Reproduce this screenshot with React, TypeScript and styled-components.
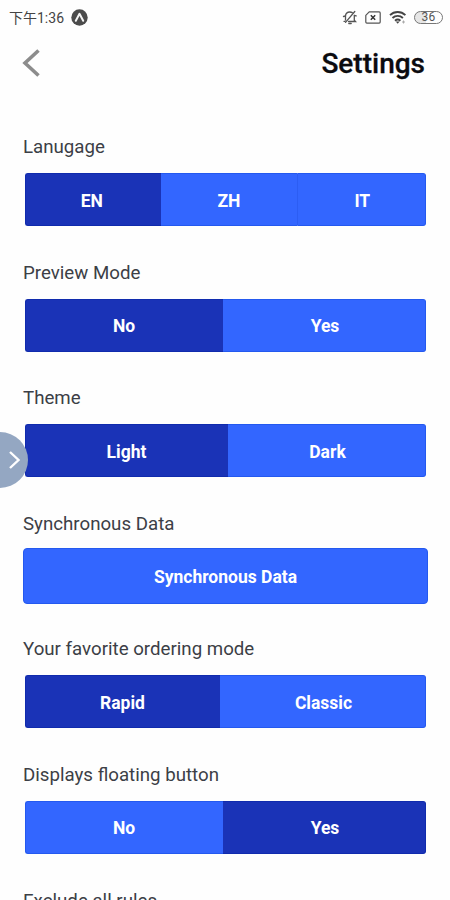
import React, { useState } from "react";
import styled, { createGlobalStyle } from "styled-components";

const GlobalStyle = createGlobalStyle`
  * { box-sizing: border-box; }
  html, body { margin: 0; background: #fefefe; }
  body { font-family: Roboto, "Noto Sans CJK SC", sans-serif; overflow: hidden; }
`;

const Screen = styled.main`
  position: relative;
  width: 450px;
  height: 900px;
  overflow: hidden;
  background: #fefefe;
`;

const StatusBar = styled.div`
  display: flex;
  align-items: center;
  justify-content: space-between;
  height: 35px;
  padding: 0 7px 0 9px;
  color: #444;
`;

const StatusGroup = styled.div<{ $gap: number }>`
  display: flex;
  align-items: center;
  gap: ${(p) => p.$gap}px;
`;

const Clock = styled.span`
  padding-top: 1px;
  font-size: 14px;
  line-height: 20px;
`;

const Battery = styled.span`
  width: 29px;
  height: 13px;
  border: 1.3px solid #777;
  border-radius: 7px;
  background: linear-gradient(90deg, #e6e6e6 40%, #fefefe 40%);
  color: #555;
  font-size: 12px;
  line-height: 11px;
  letter-spacing: 0.3px;
  text-align: center;
`;

const Header = styled.header`
  display: flex;
  align-items: center;
  justify-content: space-between;
  height: 58px;
  padding: 0 25px 0 22px;
`;

const BackButton = styled.button`
  display: flex;
  margin-top: -2px;
  padding: 0;
  border: 0;
  background: none;
`;

const Title = styled.h1`
  margin: 0;
  color: #0b0b0f;
  font-size: 28px;
  font-weight: 500;
  line-height: 34px;
  -webkit-text-stroke: 0.3px #0b0b0f;
`;

const Sections = styled.div`
  padding: 41px 22px 0 23px;
`;

const Section = styled.section`
  height: 125.6px;
`;

const Label = styled.h2`
  margin: 0 0 11.5px;
  padding-top: 1px;
  color: #3c3f46;
  font-size: 18.7px;
  font-weight: 400;
  line-height: 25px;
  white-space: nowrap;
`;

const Segments = styled.div<{ $columns: string }>`
  display: grid;
  grid-template-columns: ${(p) => p.$columns};
  height: 56px;
  padding: 1.5px 2px;
`;

const Segment = styled.button<{ $active: boolean }>`
  padding: 2px 0 0 1px;
  border: 1px solid ${(p) => (p.$active ? "#102bad" : "#2459ef")};
  border-width: 1px 0;
  background: ${(p) => (p.$active ? "#1a33b7" : "#3366ff")};
  color: #fff;
  font: 700 17.5px/24px Roboto, sans-serif;

  &:first-child { border-left-width: 1px; border-radius: 3px 0 0 3px; padding: 2px 3px 0 0; }
  &:first-child:nth-last-child(2) { padding-right: 1px; }
  &:last-child { border-right-width: 1px; border-radius: 0 3px 3px 0; padding-left: 2px; }
  &:nth-child(3) { border-left: 1px solid #2c5df3; }
`;

const ActionButton = styled.button`
  display: block;
  width: 100%;
  height: 56px;
  padding: 2px 0 0;
  border: 1px solid #2459ef;
  border-radius: 4px;
  background: #3366ff;
  color: #fff;
  font: 700 17.5px/24px Roboto, sans-serif;
`;

const DrawerHandle = styled.button`
  position: absolute;
  left: -28px;
  top: 432px;
  width: 56px;
  height: 56px;
  padding: 0 7px 0 0;
  border: 0;
  border-radius: 50%;
  background: #94a7c2;
  display: flex;
  align-items: center;
  justify-content: flex-end;
`;

const AppBadge = () => (
  <svg width="17" height="17" viewBox="0 0 17 17">
    <circle cx="8.5" cy="8.5" r="8.2" fill="#4b4b4b" />
    <path d="M4.8 11.8 8.5 4.8l3.7 7" fill="none" stroke="#f4f4f4" strokeWidth="2" strokeLinecap="round" strokeLinejoin="round" />
  </svg>
);

const MutedBell = () => (
  <svg width="16" height="15" viewBox="0 0 16 15" fill="none" stroke="#555" strokeWidth="1.3" strokeLinecap="round">
    <path d="M3.5 10V6.2C3.5 3.5 5.3 2 7.8 2c1 0 1.8.2 2.5.6M12.3 5.5v4.7l1.2 1.3H6.5M2 11.3h1M6.8 13.5h2.4" />
    <path d="M12.8 1.5 3.5 12.3" />
    <path d="M1.5 6.5 3.3 6M12.5 5.5l1.7.3" />
  </svg>
);

const NoSim = () => (
  <svg width="16" height="13" viewBox="0 0 16 13" fill="none" stroke="#555" strokeWidth="1.2" strokeLinejoin="round">
    <path d="M4.2.9h10a1 1 0 0 1 1 1v9.2a1 1 0 0 1-1 1H1.8a1 1 0 0 1-1-1V4.3z" />
    <path d="m5.8 4.3 4.4 4.4m0-4.4L5.8 8.7" strokeWidth="1.5" stroke="#333" />
  </svg>
);

const Wifi = () => (
  <svg width="18" height="15" viewBox="0 0 18 15" fill="none" stroke="#444" strokeWidth="1.9">
    <path d="M1 5.1c4.4-4.2 11-4.2 15.4 0" />
    <path d="M3.5 8c3-2.8 7.4-2.8 10.4 0" />
    <path d="M6 10.7c1.6-1.4 3.8-1.4 5.4 0" />
    <path d="m6.8 11.5 1.9 2.3 1.9-2.3z" fill="#444" stroke="none" />
    <path d="M14.5 10.5v3M13 12h3" stroke="#aaa" strokeWidth="1" />
  </svg>
);

type Setting = { label: string; options: string[]; initial: number; columns: string };

const settings: Setting[] = [
  { label: "Lanugage", options: ["EN", "ZH", "IT"], initial: 0, columns: "135.5px 136px 1fr" },
  { label: "Preview Mode", options: ["No", "Yes"], initial: 0, columns: "198px 1fr" },
  { label: "Theme", options: ["Light", "Dark"], initial: 0, columns: "203px 1fr" },
  { label: "Synchronous Data", options: [], initial: 0, columns: "1fr" },
  { label: "Your favorite ordering mode", options: ["Rapid", "Classic"], initial: 0, columns: "195px 1fr" },
  { label: "Displays floating button", options: ["No", "Yes"], initial: 1, columns: "198px 1fr" },
];

function SettingRow({ label, options, initial, columns }: Setting) {
  const [selected, setSelected] = useState(initial);
  return (
    <Section>
      <Label>{label}</Label>
      {options.length === 0 ? (
        <ActionButton>{label}</ActionButton>
      ) : (
        <Segments $columns={columns}>
          {options.map((option, i) => (
            <Segment key={option} $active={i === selected} onClick={() => setSelected(i)}>
              {option}
            </Segment>
          ))}
        </Segments>
      )}
    </Section>
  );
}

export default function App() {
  return (
    <>
      <GlobalStyle />
      <Screen>
        <StatusBar>
          <StatusGroup $gap={7}>
            <Clock>下午1:36</Clock>
            <AppBadge />
          </StatusGroup>
          <StatusGroup $gap={7.5}>
            <MutedBell />
            <NoSim />
            <Wifi />
            <Battery>36</Battery>
          </StatusGroup>
        </StatusBar>
        <Header>
          <BackButton aria-label="Back">
            <svg width="19" height="30" viewBox="0 0 19 30" fill="none" stroke="#8c8c8c" strokeWidth="3.6">
              <path d="M16.5 2.5 3 15l13.5 12.5" />
            </svg>
          </BackButton>
          <Title>Settings</Title>
        </Header>
        <Sections>
          {settings.map((s) => (
            <SettingRow key={s.label} {...s} />
          ))}
          <Label>Exclude all rules</Label>
        </Sections>
        <DrawerHandle aria-label="Open drawer">
          <svg width="13" height="20" viewBox="0 0 13 20" fill="none" stroke="#fff" strokeWidth="2.4">
            <path d="m2 2 8.5 8L2 18" />
          </svg>
        </DrawerHandle>
      </Screen>
    </>
  );
}
